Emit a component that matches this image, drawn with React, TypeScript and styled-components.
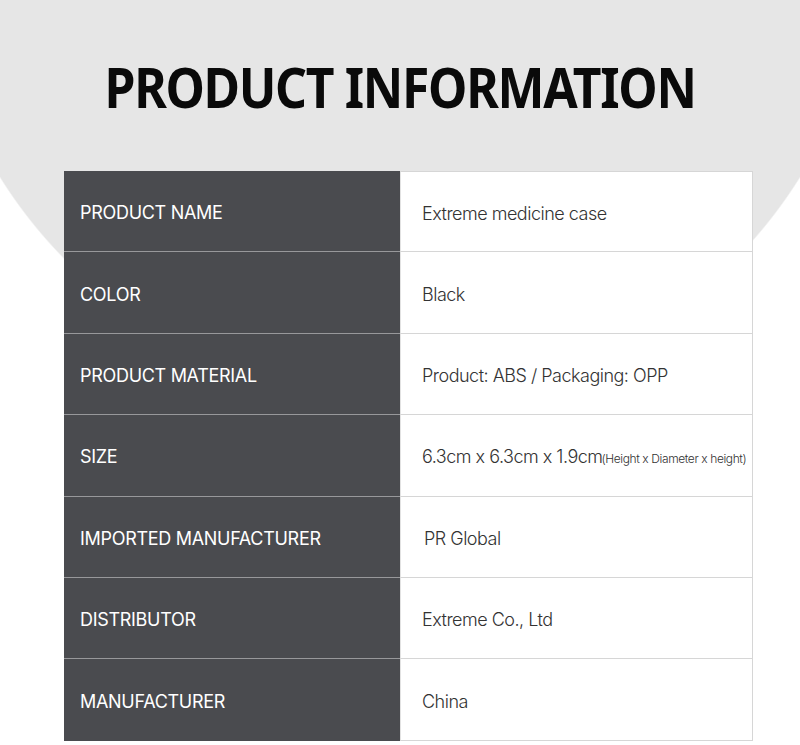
import React from 'react';
import styled, { createGlobalStyle } from 'styled-components';

const GlobalStyle = createGlobalStyle`
  html, body {
    margin: 0;
    padding: 0;
    background: #ffffff;
  }
`;

// 背景：頂部灰色大圓
const Page = styled.div`
  width: 800px;
  height: 745px;
  overflow: hidden;
  box-sizing: border-box;
  padding-top: 56px;
  background: radial-gradient(
    circle 472px at 400px -72px,
    #e6e6e6 99.7%,
    #ffffff 100%
  );
  font-family: Inter, 'Noto Sans', sans-serif;
`;

const TitleRow = styled.div`
  display: flex;
  justify-content: center;
  height: 60px;
`;

// 標題字體較窄，以 scaleX 收窄
const Title = styled.h1`
  margin: 0;
  font-family: 'Noto Sans', sans-serif;
  font-weight: 700;
  font-size: 56px;
  line-height: 60px;
  letter-spacing: -1.5px;
  color: #0a0a0a;
  white-space: nowrap;
  transform: scaleX(0.89);
  transform-origin: center;
`;

const Table = styled.div`
  margin: 55px 0 0 64px;
  width: 689px;
  display: grid;
  grid-template-columns: 336px 353px;
  grid-auto-rows: 81.4px;
`;

const Label = styled.div<{ $last?: boolean }>`
  background: #4a4b4f;
  color: #ffffff;
  display: flex;
  align-items: center;
  padding: 3px 0 0 16px;
  font-size: 18px;
  font-weight: 400;
  letter-spacing: -0.3px;
  border-bottom: 1px solid ${(p) => (p.$last ? '#4a4b4f' : '#98989b')};
`;

const Value = styled.div<{ $indent?: number }>`
  background: #ffffff;
  color: #333333;
  display: flex;
  align-items: center;
  padding: 3px 0 0 ${(p) => 21 + (p.$indent || 0)}px;
  font-size: 18px;
  font-weight: 300;
  letter-spacing: -0.5px;
  border-right: 1px solid #d6d6d6;
  border-bottom: 1px solid #d6d6d6;
  border-left: 1px solid #e2e2e2;
`;

const FirstValue = styled(Value)`
  border-top: 1px solid #d6d6d6;
`;

const Small = styled.span`
  font-size: 12px;
  letter-spacing: -0.4px;
  margin-left: -1px;
  padding-top: 3px;
`;

const rows: { label: string; value: React.ReactNode; indent?: number }[] = [
  { label: 'PRODUCT NAME', value: 'Extreme medicine case' },
  { label: 'COLOR', value: 'Black' },
  { label: 'PRODUCT MATERIAL', value: 'Product: ABS / Packaging: OPP' },
  {
    label: 'SIZE',
    value: (
      <>
        6.3cm x 6.3cm x 1.9cm<Small>(Height x Diameter x height)</Small>
      </>
    ),
  },
  { label: 'IMPORTED MANUFACTURER', value: 'PR Global', indent: 2 },
  { label: 'DISTRIBUTOR', value: 'Extreme Co., Ltd' },
  { label: 'MANUFACTURER', value: 'China' },
];

export default function App() {
  return (
    <Page>
      <GlobalStyle />
      <TitleRow>
        <Title>PRODUCT INFORMATION</Title>
      </TitleRow>
      <Table>
        {rows.map((row, i) => {
          const Cell = i === 0 ? FirstValue : Value;
          return (
            <React.Fragment key={row.label}>
              <Label $last={i === rows.length - 1}>{row.label}</Label>
              <Cell $indent={row.indent}>{row.value}</Cell>
            </React.Fragment>
          );
        })}
      </Table>
    </Page>
  );
}
